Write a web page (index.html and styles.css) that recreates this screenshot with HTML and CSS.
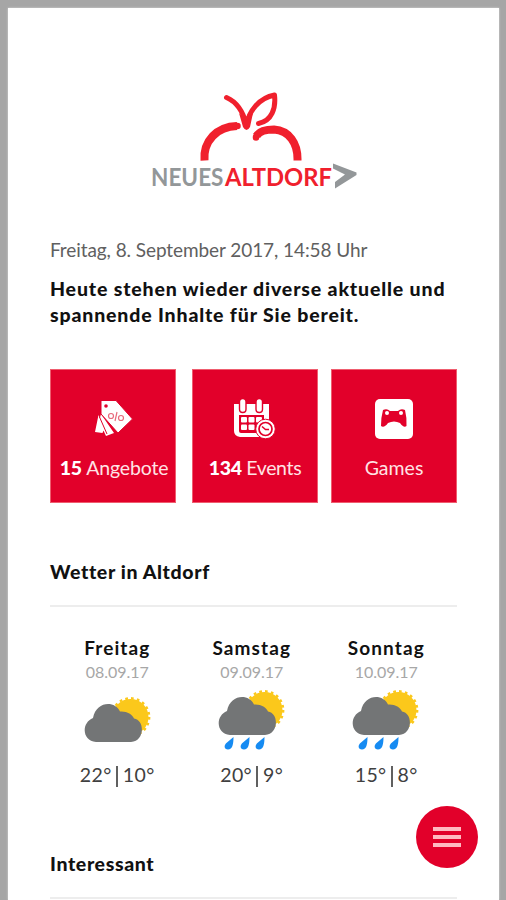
FILE: index.html
```html
<!DOCTYPE html>
<html lang="de">
<head>
<meta charset="utf-8">
<meta name="viewport" content="width=device-width, initial-scale=1">
<title>Neues Altdorf</title>
<link rel="stylesheet" href="styles.css">
</head>
<body>
<svg class="defs" aria-hidden="true">
  <defs>
    <g id="sun-cloud">
      <circle cx="46.500" cy="20" r="18" fill="#fbc81b"/>
      <circle cx="46.500" cy="20" r="18.700" fill="none" stroke="#fbc81b" stroke-width="2.400" stroke-dasharray="2.700 3.175"/>
      <path d="M12 45C-2 44-3 26 9 21C12 4 31 3 36 14.500C43 14 48 17 50 21.500C61 23 61 44 47 45Z" fill="#737576"/>
    </g>
    <path id="drop" d="M9.500 0C9.500 7 8.500 12.500 4 12.500C0 12.500-.500 8 3 5.500Z" fill="#168bf2"/>
  </defs>
</svg>
<main class="screen">
  <header class="brand">
    <svg width="210" height="100" viewBox="148 90 210 100">
      <g fill="none" stroke="#f0202d">
        <path d="M204.500 160.500C203 141 217 126.500 237 126" stroke-width="8"/>
        <path d="M297.500 160.500C298 143 289 130.500 274 129.500C265 129.500 259 131.500 256.500 136" stroke-width="8"/>
        <path d="M236 126H237.500M256 137V137.500" stroke-width="6.500" stroke-linecap="round"/>
        <path d="M226.500 97.500C237 102 243 111 246.500 125C249 111 259 98 274.500 95C276 108 272 121 258.500 123.500" stroke-width="5" stroke-linecap="round" stroke-linejoin="round"/>
      </g>
      <path d="M239 113L243 127Q246.500 133 250 127L253 113L247 121Z" fill="#f0202d"/>
      <text class="logo-grey" x="151" y="185.500" textLength="72.500" lengthAdjust="spacingAndGlyphs">NEUES</text>
      <text class="logo-red" x="225" y="185.500" textLength="107" lengthAdjust="spacingAndGlyphs">ALTDORF</text>
      <path d="M333 163.500L356.500 172.500V175L335 188.500V182L345 174.500L333 168.500Z" fill="#939799"/>
    </svg>
  </header>
  <p class="date">Freitag, 8. September 2017, 14:58 Uhr</p>
  <p class="intro">Heute stehen wieder diverse aktuelle und<br>spannende Inhalte für Sie bereit.</p>
  <nav class="tiles">
    <a class="tile">
      <svg width="42" height="44" viewBox="92 396 42 44">
        <path d="M98.500 414L95 431L102.500 432L104 428ZM101 413L99 420L106 435L114 432Z" fill="#fff"/>
        <path d="M101 399.500L116 399.500L132.500 418L118 432L101 413Z" fill="#fff" stroke="#e2002a" stroke-width="1"/>
        <path d="M99.500 416L107 433" stroke="#e2002a"/>
        <circle cx="106" cy="405" r="1.800" fill="#e2002a"/>
        <g fill="none" stroke="#e86a7c" stroke-width="1.200"><circle cx="111" cy="415" r="2.500"/><circle cx="121" cy="417" r="2.500"/><path d="M117 411L115 420"/></g>
      </svg>
      <span class="label label-offers"><b>15</b> Angebote</span>
    </a>
    <a class="tile tile-events">
      <svg width="44" height="44" viewBox="234 396 44 44">
        <path d="M235 403H270V436H241Q235 435 235 430Z" fill="#fff"/>
        <path d="M240 414H265V430Q265 432 263 432H242Q240 432 240 430Z" fill="#e2002a"/>
        <g fill="#fff"><rect x="242" y="416" width="6" height="5.500" rx="1"/><rect x="249.500" y="416" width="6" height="5.500" rx="1"/><rect x="257" y="416" width="6" height="5.500" rx="1"/><rect x="242" y="423.500" width="6" height="5.500" rx="1"/><rect x="249.500" y="423.500" width="6" height="5.500" rx="1"/></g>
        <g fill="#fff" stroke="#e2002a" stroke-width="1.400"><rect x="240.500" y="397.500" width="6.500" height="14" rx="3.200"/><rect x="257" y="397.500" width="6.500" height="14" rx="3.200"/></g>
        <circle cx="266.500" cy="428" r="9.800" fill="#fff" stroke="#e2002a"/>
        <circle cx="266.500" cy="428" r="6.500" fill="#fff" stroke="#e2002a" stroke-width="1.700"/>
        <path d="M263 425.500L266.500 428.500H270" fill="none" stroke="#e2002a" stroke-width="1.500"/>
      </svg>
      <span class="label label-events"><b>134</b> Events</span>
    </a>
    <a class="tile">
      <svg width="40" height="44" viewBox="374 396 40 44">
        <rect x="375" y="398" width="38" height="40" rx="5" fill="#fff"/>
        <path d="M383 409Q387 407 390 410H398Q401 407 405 409Q407 417 406.500 425Q404 427.500 400 422Q394 419 388 422Q384 427.500 381 425Q381 416 383 409Z" fill="#e2002a"/>
        <circle cx="387" cy="412" r="2" fill="#fff"/><circle cx="401" cy="412" r="2" fill="#fff"/>
      </svg>
      <span class="label label-games">Games</span>
    </a>
  </nav>
  <section class="weather">
    <h2>Wetter in Altdorf</h2>
    <div class="days">
      <div class="day">
        <h3>Freitag</h3>
        <p class="day-date">08.09.17</p>
        <svg class="dry" width="68" height="62" viewBox="0 0 68 62"><use href="#sun-cloud"/></svg>
        <p class="temp">22°<i></i>10°</p>
      </div>
      <div class="day">
        <h3>Samstag</h3>
        <p class="day-date">09.09.17</p>
        <svg width="68" height="62" viewBox="0 0 68 62"><use href="#sun-cloud"/><use href="#drop" x="6" y="47"/><use href="#drop" x="22" y="47"/><use href="#drop" x="37" y="47"/></svg>
        <p class="temp">20°<i></i>9°</p>
      </div>
      <div class="day">
        <h3>Sonntag</h3>
        <p class="day-date">10.09.17</p>
        <svg width="68" height="62" viewBox="0 0 68 62"><use href="#sun-cloud"/><use href="#drop" x="6" y="47"/><use href="#drop" x="22" y="47"/><use href="#drop" x="37" y="47"/></svg>
        <p class="temp">15°<i></i>8°</p>
      </div>
    </div>
  </section>
  <section class="interesting">
    <h2>Interessant</h2>
  </section>
</main>
<button class="fab" aria-label="Menü"><span></span><span></span><span></span></button>
</body>
</html>
```
FILE: styles.css
```css
* { box-sizing: border-box; }
html, body { height: 100%; }
body {
  margin: 0;
  overflow: hidden;
  background: #a6a6a6;
  font-family: Lato, "Liberation Sans", sans-serif;
  font-variant-ligatures: none;
  color: #111;
}
p, h2, h3 { margin: 0; white-space: nowrap; }
svg { display: block; }
.defs { position: absolute; width: 0; height: 0; }
.screen {
  height: 892px;
  margin: 8px 7px 0 8px;
  padding: 82px 42px 0;
  background: #fff;
  overflow: hidden;
  box-shadow: 0 0 2px #d8d8d8;
}
.brand { height: 100px; padding-left: 98px; }
.logo-grey, .logo-red { font-size: 25.500px; font-weight: 700; }
.logo-grey { fill: #939799; }
.logo-red { fill: #f0202d; }
.date {
  height: 24px;
  margin-top: 48px;
  font-size: 19px;
  line-height: 24px;
  letter-spacing: -.080px;
  color: #606060;
}
.intro {
  margin-top: 14px;
  font-size: 19.500px;
  font-weight: 900;
  line-height: 25.500px;
  letter-spacing: .840px;
}
.tiles {
  display: grid;
  grid-template-columns: 126px 126px 126px;
  justify-content: space-between;
  margin-top: 42px;
  height: 134px;
}
.tile {
  display: flex;
  flex-direction: column;
  align-items: center;
  padding-top: 27px;
  background: #e2002a;
  border: 1px solid #ef5d6f;
  color: #ffe3e5;
}
.tile-events { position: relative; left: 1.500px; }
.label {
  margin-top: 15px;
  font-size: 19.500px;
  line-height: 24px;
  white-space: nowrap;
}
.label-offers { letter-spacing: -.150px; padding-left: 2px; }
.label-events { letter-spacing: -.350px; }
.label b { color: #fff; font-weight: 900; }
h2 {
  height: 48px;
  font-size: 19.500px;
  font-weight: 900;
  line-height: 26px;
  letter-spacing: .620px;
  border-bottom: 2px solid #ededed;
}
.weather { margin-top: 56px; height: 292px; }
.days {
  display: grid;
  grid-template-columns: repeat(3, 134.500px);
  margin: 28px 0 0;
}
.day { display: flex; flex-direction: column; align-items: center; }
h3 { font-size: 19px; font-weight: 700; line-height: 26px; letter-spacing: 1.100px; }
.day-date { font-size: 16px; line-height: 22px; color: #a7a7a7; }
.day svg { margin-top: 7px; }
.day .dry { transform: translate(1px, 7px); }
.temp {
  display: flex;
  align-items: center;
  margin-top: 9px;
  font-size: 19.500px;
  line-height: 28px;
  letter-spacing: .400px;
  color: #404040;
}
.temp i { width: 2px; height: 21px; margin: 3px 5px 0 4px; background: #606060; }
.fab {
  position: absolute;
  left: 416px;
  top: 806px;
  width: 62px;
  height: 62px;
  padding: 0;
  border: 0;
  border-radius: 50%;
  background: #e2002a;
  display: flex;
  flex-direction: column;
  align-items: center;
  justify-content: center;
  gap: 4px;
}
.fab span { width: 28px; height: 4px; background: #ffb9c1; }
```
